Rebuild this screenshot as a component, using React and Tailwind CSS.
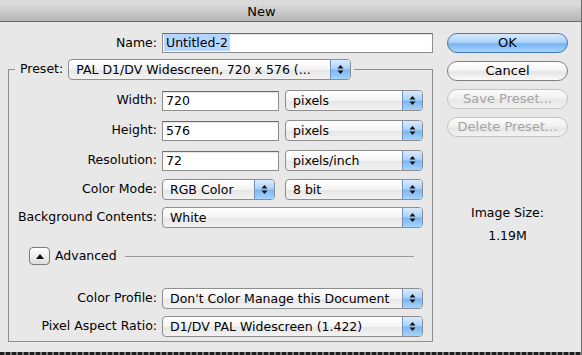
import React from 'react';

function Arrows() {
  return (
    <svg width="7" height="11" viewBox="0 0 7 11">
      <polygon points="0.5,4.5 3.5,1 6.5,4.5" fill="#111" />
      <polygon points="0.5,6.5 3.5,10 6.5,6.5" fill="#111" />
    </svg>
  );
}

function Popup({ className, children }) {
  return (
    <div
      className={`flex h-[21px] shrink-0 items-stretch rounded-[4px] border border-[#8d8d8d] bg-[linear-gradient(to_bottom,#ffffff_0%,#f4f4f4_50%,#e6e6e6_51%,#f2f2f2_100%)] ${className}`}
    >
      <div className="flex-1 truncate pl-[7px] leading-[19px]">{children}</div>
      <div className="flex w-[20px] items-center justify-center rounded-r-[3px] border-l border-[#6f93c4] bg-[linear-gradient(to_bottom,#d9ebfd_0%,#a9d0f8_48%,#7ab5f1_52%,#a8d4fb_100%)]">
        <Arrows />
      </div>
    </div>
  );
}

function Field({ className, children }) {
  return (
    <div
      className={`h-[20px] shrink-0 border border-[#8e8e8e] border-t-[#6c6c6c] bg-white pl-[3px] leading-[18px] shadow-[inset_0_1px_1px_rgba(0,0,0,0.12)] ${className}`}
    >
      {children}
    </div>
  );
}

function Row({ label, className, children }) {
  return (
    <div className={`flex items-center ${className}`}>
      <div className="w-[148px] shrink-0 text-right">{label}</div>
      <div className="ml-[5px] flex items-center gap-[6px]">{children}</div>
    </div>
  );
}

function AquaButton({ kind, children }) {
  const styles = {
    ok: 'border-[#4675b4] bg-[linear-gradient(to_bottom,#d6eafd_0%,#aed4f9_45%,#78b4f1_55%,#a6d6fc_100%)] text-black',
    normal: 'border-[#7f7f7f] bg-[linear-gradient(to_bottom,#ffffff_0%,#f5f5f5_45%,#e5e5e5_55%,#fafafa_100%)] text-black',
    disabled: 'border-[#c3c3c3] bg-[linear-gradient(to_bottom,#fbfbfb_0%,#f1f1f1_45%,#e7e7e7_55%,#f3f3f3_100%)] text-[#a4a4a4]',
  };
  return (
    <div className={`flex h-[20px] w-[121px] items-center justify-center rounded-full border ${styles[kind]}`}>
      {children}
    </div>
  );
}

export default function App() {
  return (
    <div className="flex h-[355px] w-[582px] flex-col overflow-hidden border-r border-[#6a6a6a] bg-[#e8e8e8] font-['DejaVu_Sans',sans-serif] text-[12.5px] text-black">
      <div className="flex h-[22px] shrink-0 items-center justify-center border-t-[3px] border-b border-t-[#d9d9d9] border-b-[#6b6b6b] bg-[linear-gradient(to_bottom,#dcdcdc,#b5b5b5)] pr-[58px] text-[13px]">
        New
      </div>

      <div className="flex flex-1">
        <div className="w-[440px] shrink-0">
          <div className="mt-[11px] flex items-center">
            <div className="w-[157px] text-right">Name:</div>
            <Field className="ml-[5px] w-[271px] !pl-[1px]">
              <span className="bg-[#b5d5fe] px-[2px] py-[1px]">Untitled-2</span>
            </Field>
          </div>

          <fieldset className="ml-[8px] mt-[6px] h-[283px] w-[425px] border border-[#8f8f8f] px-0 pb-[5px]">
            <legend className="ml-[6px] flex items-center pl-[5px] pr-[3px]">
              <span>Preset:</span>
              <Popup className="ml-[5px] w-[283px]">PAL D1/DV Widescreen, 720 x 576 (...</Popup>
            </legend>

            <Row label="Width:" className="mt-[10px]">
              <Field className="w-[117px]">720</Field>
              <Popup className="w-[138px]">pixels</Popup>
            </Row>
            <Row label="Height:" className="mt-[9px]">
              <Field className="w-[117px]">576</Field>
              <Popup className="w-[138px]">pixels</Popup>
            </Row>
            <Row label="Resolution:" className="mt-[9px]">
              <Field className="w-[117px]">72</Field>
              <Popup className="w-[138px]">pixels/inch</Popup>
            </Row>
            <Row label="Color Mode:" className="mt-[8px]">
              <Popup className="w-[113px]">RGB Color</Popup>
              <Popup className="ml-[4px] w-[138px]">8 bit</Popup>
            </Row>
            <Row label="Background Contents:" className="mt-[7px]">
              <Popup className="w-[261px]">White</Popup>
            </Row>

            <div className="mt-[19px] flex items-center">
              <div className="ml-[20px] flex h-[18px] w-[21px] items-center justify-center rounded-[4px] border border-[#7a7a7a] bg-[linear-gradient(to_bottom,#ffffff,#dedede)]">
                <svg width="8" height="5" viewBox="0 0 8 5">
                  <polygon points="0,5 4,0 8,5" fill="#111" />
                </svg>
              </div>
              <span className="ml-[5px]">Advanced</span>
              <div className="ml-[8px] mr-[18px] h-px flex-1 bg-[#9a9a9a]" />
            </div>

            <Row label="Color Profile:" className="mt-[22px]">
              <Popup className="w-[261px]">Don't Color Manage this Document</Popup>
            </Row>
            <Row label="Pixel Aspect Ratio:" className="mt-[7px]">
              <Popup className="w-[261px]">D1/DV PAL Widescreen (1.422)</Popup>
            </Row>
          </fieldset>
        </div>

        <div className="ml-[7px] mt-[11px] flex w-[121px] flex-col text-[13px]">
          <div className="flex flex-col gap-[8px]">
            <AquaButton kind="ok">OK</AquaButton>
            <AquaButton kind="normal">Cancel</AquaButton>
            <AquaButton kind="disabled">Save Preset...</AquaButton>
            <AquaButton kind="disabled">Delete Preset...</AquaButton>
          </div>
          <div className="mt-[68px] text-center text-[12.5px] leading-[15px]">Image Size:</div>
          <div className="mt-[8px] text-center text-[12.5px] leading-[15px]">1.19M</div>
        </div>
      </div>

      <div className="h-[3px] shrink-0 bg-[repeating-linear-gradient(90deg,#1e1e1e_0px,#1e1e1e_4px,#7a7a7a_4px,#7a7a7a_6px)]" />
    </div>
  );
}
